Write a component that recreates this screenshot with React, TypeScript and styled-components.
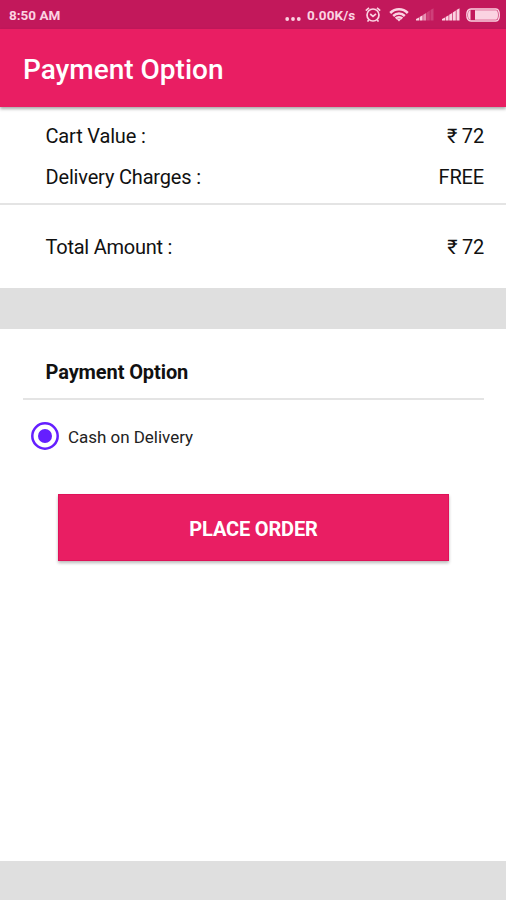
import React from "react";
import styled, { createGlobalStyle } from "styled-components";

const GlobalStyle = createGlobalStyle`
  * { box-sizing: border-box; }
  body { margin: 0; background: #dfdfdf; }
`;

const Screen = styled.div`
  display: flex;
  flex-direction: column;
  width: 506px;
  height: 900px;
  overflow: hidden;
  background: #dfdfdf;
  font-family: Roboto, "Noto Sans", sans-serif;
  color: #111;
`;

const StatusBar = styled.header`
  display: flex;
  align-items: center;
  justify-content: space-between;
  flex: none;
  height: 28.5px;
  padding: 1px 6px 0 9px;
  background: #c2185b;
  color: #fbd3e2;
  font-size: 13px;
  font-weight: 700;
`;

const Clock = styled.span`
  font-size: 13.5px;
  letter-spacing: 0;
`;

const StatusItems = styled.div`
  display: flex;
  align-items: center;
  svg { display: block; }
`;

const Speed = styled.span`
  width: 50px;
  margin: 0 8px 0 6px;
  font-size: 13.5px;
  letter-spacing: 0.1px;
  white-space: nowrap;
`;

const Gap = styled.span<{ $w: number }>`
  width: ${(p) => p.$w}px;
`;

const AppBar = styled.div`
  display: flex;
  align-items: center;
  flex: none;
  height: 78px;
  padding: 4px 23px 0;
  background: #e91e63;
  box-shadow: 0 2px 3px rgba(0, 0, 0, 0.34);
  z-index: 1;
`;

const Title = styled.h1`
  margin: 0;
  color: #fff;
  font-size: 28px;
  font-weight: 500;
  line-height: 34px;
`;

const Summary = styled.section`
  flex: none;
  height: 181px;
  padding-top: 9px;
  background: #fff;
`;

const SummaryRow = styled.div<{ $height: number; $tracking?: number }>`
  display: flex;
  align-items: center;
  justify-content: space-between;
  height: ${(p) => p.$height}px;
  padding: 0 22px 0 45.5px;
  font-size: 20px;
  letter-spacing: ${(p) => p.$tracking ?? -0.17}px;
`;

const Rule = styled.hr<{ $inset?: number; $gap?: number }>`
  height: 2px;
  margin: ${(p) => p.$gap ?? 0}px ${(p) => p.$inset ?? 0}px 0;
  border: 0;
  background: #e4e4e4;
`;

const Options = styled.main`
  flex: none;
  height: 532px;
  margin-top: 41.5px;
  background: #fff;
`;

const SectionTitle = styled.h2`
  display: flex;
  align-items: center;
  height: 69px;
  margin: 0;
  padding: 16px 45.5px 0;
  font-size: 20px;
  font-weight: 700;
  letter-spacing: -0.1px;
`;

const RadioRow = styled.label`
  display: flex;
  align-items: center;
  gap: 9px;
  height: 76px;
  padding-left: 31px;
  font-size: 17px;
  letter-spacing: -0.03px;
  color: #222;
`;

const Radio = styled.svg`
  display: block;
  width: 28px;
  height: 28px;
  margin-top: -4px;
`;

const RadioLabel = styled.span`
  margin-top: -2px;
`;

const OrderButton = styled.button`
  display: block;
  width: 391px;
  height: 67px;
  margin: 18px 0 0 58px;
  padding: 2px 0 0;
  border: 1px solid #df1259;
  background: #e91e63;
  box-shadow: 0 2px 3px rgba(0, 0, 0, 0.28);
  color: #fff;
  font: 700 20px Roboto, sans-serif;
  letter-spacing: -0.16px;
`;

const Dots = () => (
  <svg width="16" height="14" viewBox="0 0 16 14" fill="currentColor">
    <circle cx="2.2" cy="11" r="1.9" />
    <circle cx="8" cy="11" r="1.9" />
    <circle cx="13.8" cy="11" r="1.9" />
  </svg>
);

const Alarm = () => (
  <svg width="16" height="16" viewBox="0 0 16 16" fill="none" stroke="currentColor" strokeWidth="1.7">
    <circle cx="8" cy="8" r="6" />
    <path d="M.8 3.600 4 .8M15.200 3.600 12 .8M3.800 12.600 2.600 14.600M12.200 12.600 13.400 14.600M5.200 7 8 9.300 11 6.800" />
  </svg>
);

const Wifi = () => (
  <svg width="20" height="14" viewBox="0 0 20 14" fill="none" stroke="currentColor" strokeWidth="2.5">
    <path d="M1.200 5C6.200 0 13.800 0 18.800 5M4.200 8C7.500 4.800 12.500 4.800 15.800 8M6.700 10.500C8.500 8.800 11.500 8.800 13.300 10.500" />
    <path d="M7.200 10.500h5.600L10 13.600Z" fill="currentColor" stroke="none" />
  </svg>
);

const Signal = ({ weak = false }: { weak?: boolean }) => (
  <svg width="18" height="13" viewBox="0 0 18 13" fill="currentColor">
    <path d="M0 12.500V11l3-1.400v2.900ZM3.600 12.500V9l3-1.700v5.200Z" />
    <path d="M7.200 12.500V6.800l3-1.900v7.600Z" opacity={weak ? 0.65 : 1} />
    <path d="M10.800 12.500V4.400l3-1.800v9.900ZM14.500 12.500V2L17.500.2v12.300Z" opacity={weak ? 0.22 : 1} />
  </svg>
);

const Battery = () => (
  <svg width="34" height="14" viewBox="0 0 34 14" fill="none">
    <path d="M5 1H30c2.200 0 3.300 2.600 3.300 6S32.200 13 30 13H5C2.200 13 .8 10.500 .8 7S2.200 1 5 1Z" stroke="currentColor" strokeWidth="1.400" />
    <path d="M9 2.300H30.200c1.200 0 1.800 1.800 1.800 4.700s-.6 4.700-1.800 4.700H9Z" fill="currentColor" />
    <path d="M4.500 2v10C2.500 11.500 2 10 2 7s.5-4.500 2.500-5Z" fill="currentColor" />
  </svg>
);

export default function App() {
  return (
    <>
      <GlobalStyle />
      <Screen>
        <StatusBar>
          <Clock>8:50 AM</Clock>
          <StatusItems>
            <Dots />
            <Speed>0.00K/s</Speed>
            <Alarm />
            <Gap $w={8} />
            <Wifi />
            <Gap $w={7} />
            <Signal weak />
            <Gap $w={8} />
            <Signal />
            <Gap $w={6} />
            <Battery />
          </StatusItems>
        </StatusBar>
        <AppBar>
          <Title>Payment Option</Title>
        </AppBar>
        <Summary>
          <SummaryRow $height={41}><span>Cart Value :</span><span>₹ 72</span></SummaryRow>
          <SummaryRow $height={41}><span>Delivery Charges :</span><span>FREE</span></SummaryRow>
          <Rule $gap={5} />
          <SummaryRow $height={85} $tracking={-0.24}><span>Total Amount :</span><span>₹ 72</span></SummaryRow>
        </Summary>
        <Options>
          <SectionTitle>Payment Option</SectionTitle>
          <Rule $inset={22.5} />
          <RadioRow>
            <Radio viewBox="0 0 28 28">
              <circle cx="14" cy="14" r="12.7" fill="none" stroke="#651fff" strokeWidth="2.5" />
              <circle cx="14" cy="14" r="7" fill="#651fff" />
            </Radio>
            <RadioLabel>Cash on Delivery</RadioLabel>
          </RadioRow>
          <OrderButton>PLACE ORDER</OrderButton>
        </Options>
      </Screen>
    </>
  );
}
